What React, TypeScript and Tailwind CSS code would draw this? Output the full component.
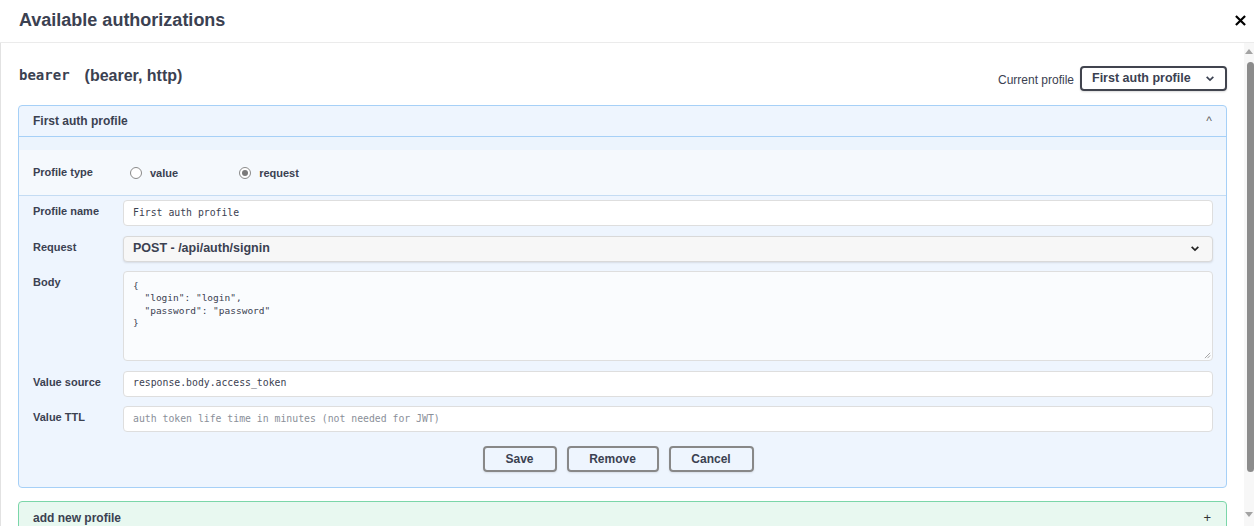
import React from 'react';

const sans = "font-['Liberation_Sans',Arial,sans-serif]";
const mono = "font-['DejaVu_Sans_Mono','Liberation_Mono',monospace]";

function Chevron({ className }: { className?: string }) {
  return (
    <svg viewBox="0 0 12 8" className={className} fill="none" stroke="currentColor" strokeWidth="2">
      <path d="M2 2l4 4 4-4" />
    </svg>
  );
}

function Field({ label, children }: { label: string; children: React.ReactNode }) {
  return (
    <div className="flex items-start">
      <div className="w-[90px] shrink-0 pt-[3px] text-[11px] leading-[16px] font-bold">{label}</div>
      <div className="flex-1">{children}</div>
    </div>
  );
}

function Radio({ checked, label }: { checked?: boolean; label: string }) {
  return (
    <div className="flex items-center gap-[8px]">
      <span className="w-[12px] h-[12px] rounded-full border border-[#8a8a8a] bg-white flex items-center justify-center">
        {checked && <span className="w-[6px] h-[6px] rounded-full bg-[#7a7a7a]" />}
      </span>
      <span className="text-[11px] font-bold">{label}</span>
    </div>
  );
}

export default function App() {
  return (
    <div className={`w-full h-[526px] bg-white overflow-hidden text-[#3b4151] ${sans}`}>
      {/* modal header */}
      <div className="h-[43px] flex items-center justify-between pl-[19px] pr-[8px] pb-[2px] border-b border-[#ebebeb]">
        <h2 className="text-[18px] font-bold">Available authorizations</h2>
        <svg viewBox="0 0 12 12" className="w-[11px] h-[11px] text-black" stroke="currentColor" strokeWidth="2.4">
          <path d="M1 1l10 10M11 1L1 11" />
        </svg>
      </div>

      <div className="flex h-[483px]">
        <div className="flex-1 border-l border-[#e2e2e2] px-[17px] pt-[23px]">
          {/* scheme title + profile selector */}
          <div className="h-[25px] flex items-center justify-between">
            <h4 className="flex items-center gap-[15px] pl-[1px] pb-[6px]">
              <code className={`${mono} text-[14px] font-bold`}>bearer</code>
              <span className="text-[16px] font-semibold">(bearer, http)</span>
            </h4>
            <div className="flex items-center gap-[6px]">
              <span className="text-[12px] mt-[2px]">Current profile</span>
              <div className="w-[147px] h-[25px] border-2 border-[#41444e] rounded-[4px] shadow-[0_1px_2px_rgba(0,0,0,0.15)] flex items-center justify-between pl-[10px] pr-[10px]">
                <span className="text-[12.5px] font-bold">First auth profile</span>
                <Chevron className="w-[10px] h-[7px] text-[#3b4151]" />
              </div>
            </div>
          </div>

          {/* profile panel */}
          <div className="mt-[14px] border border-[#a6d0f7] rounded-[4px] bg-[#eef5fe]">
            <div className="h-[31px] flex items-center justify-between pl-[14px] pr-[14px] border-b border-[#a6d0f7]">
              <span className="text-[12px] font-semibold">First auth profile</span>
              <span className="text-[12px] text-[#666]">^</span>
            </div>
            <div className="h-[13px] bg-[#ecf4fd]" />
            <div className="h-[46px] bg-[#f5f9fd] border-b border-[#c4dcf3] flex items-center pl-[14px]">
              <div className="w-[90px] text-[11px] font-bold">Profile type</div>
              <div className="flex items-center gap-[61px] pl-[7px] pt-[1px]">
                <Radio label="value" />
                <Radio checked label="request" />
              </div>
            </div>

            <div className="flex flex-col gap-[9.5px] pt-[4px] pl-[14px] pr-[13px]">
              <Field label="Profile name">
                <div className={`h-[26px] bg-white border border-[#dedede] rounded-[4px] flex items-center pl-[9px] ${mono} text-[9.8px] text-[#3b4151]`}>
                  First auth profile
                </div>
              </Field>
              <Field label="Request">
                <div className="h-[26px] bg-[#f7f7f7] border border-[#d9d9d9] rounded-[4px] shadow-[0_1px_2px_rgba(0,0,0,0.1)] flex items-center justify-between pl-[9px] pr-[12px]">
                  <span className="text-[12.5px] font-bold">POST - /api/auth/signin</span>
                  <Chevron className="w-[10px] h-[7px] text-[#222]" />
                </div>
              </Field>
              <Field label="Body">
                <div className="relative h-[90px] bg-[#fafcfe] border border-[#dedede] rounded-[4px] pl-[9px] pt-[8px]">
                  <pre className={`${mono} text-[9.5px] leading-[12.3px] text-[#3b4151]`}>
{`{
  "login": "login",
  "password": "password"
}`}
                  </pre>
                  <svg viewBox="0 0 8 8" className="absolute right-[1px] bottom-[1px] w-[7px] h-[7px]" stroke="#999" strokeWidth="1">
                    <path d="M7 1L1 7M7 4L4 7" />
                  </svg>
                </div>
              </Field>
              <Field label="Value source">
                <div className={`h-[26px] bg-white border border-[#dedede] rounded-[4px] flex items-center pl-[9px] ${mono} text-[9.8px] text-[#3b4151]`}>
                  response.body.access_token
                </div>
              </Field>
              <Field label="Value TTL">
                <div className={`h-[26px] bg-white border border-[#dedede] rounded-[4px] flex items-center pl-[9px] ${mono} text-[9.8px] text-[#8a8f99]`}>
                  auth token life time in minutes (not needed for JWT)
                </div>
              </Field>
            </div>

            <div className="flex justify-center gap-[10px] mt-[14px] mb-[15px] pr-[9px]">
              {[
                ['Save', 'w-[74px]'],
                ['Remove', 'w-[92px]'],
                ['Cancel', 'w-[85px]'],
              ].map(([t, w]) => (
                <button key={t} className={`${w} h-[26px] border-2 border-[#888] rounded-[4px] text-[12px] font-bold text-[#3b4151] shadow-[0_1px_2px_rgba(0,0,0,0.1)]`}>
                  {t}
                </button>
              ))}
            </div>
          </div>

          {/* add new profile */}
          <div className="mt-[13px] border border-[#7bd6a9] rounded-[4px] bg-[#e8f8f0] h-[40px]">
            <div className="h-[31px] flex items-center justify-between pl-[14px] pr-[15px] pt-[1px]">
              <span className="text-[12px] font-semibold">add new profile</span>
              <span className="text-[13px] text-[#333]">+</span>
            </div>
          </div>
        </div>

        {/* scrollbar */}
        <div className="w-[10px] bg-[#f7f7f7] flex flex-col items-center">
          <div className="mt-[6px] w-0 h-0 border-l-[4px] border-r-[4px] border-b-[5px] border-l-transparent border-r-transparent border-b-[#a3a3a3]" />
          <div className="mt-[8px] w-[7px] h-[410px] rounded-[4px] bg-[#8c8c8c] ml-[2px]" />
          <div className="mt-[40px] w-0 h-0 border-l-[4px] border-r-[4px] border-t-[5px] border-l-transparent border-r-transparent border-t-[#a3a3a3]" />
        </div>
      </div>
    </div>
  );
}
